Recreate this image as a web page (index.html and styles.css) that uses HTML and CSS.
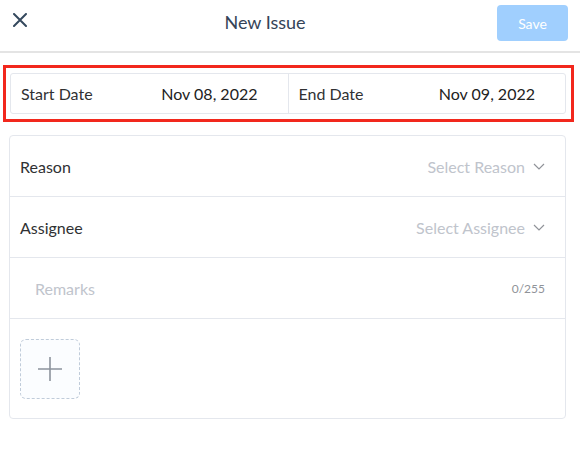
FILE: index.html
```html
<!DOCTYPE html>
<html>
<head>
<meta charset="utf-8">
<link rel="stylesheet" href="styles.css">
</head>
<body>
<div class="page">
  <header class="header">
    <button class="close" aria-label="Close">
      <svg width="14" height="14" viewBox="0 0 14 14"><path d="M1 1L13 13M13 1L1 13" stroke="#34495e" stroke-width="2" stroke-linecap="round"/></svg>
    </button>
    <div class="title">New Issue</div>
    <button class="save">Save</button>
  </header>

  <div class="highlight">
    <div class="dates">
      <div class="date-cell">
        <span class="date-label">Start Date</span>
        <span class="date-value">Nov 08, 2022</span>
      </div>
      <div class="date-cell">
        <span class="date-label">End Date</span>
        <span class="date-value">Nov 09, 2022</span>
      </div>
    </div>
  </div>

  <div class="card">
    <div class="row">
      <span class="row-label">Reason</span>
      <span class="select">Select Reason
        <svg width="12" height="7" viewBox="0 0 12 7"><path d="M1 1L6 6L11 1" fill="none" stroke="#909399" stroke-width="1.2"/></svg>
      </span>
    </div>
    <div class="row">
      <span class="row-label">Assignee</span>
      <span class="select">Select Assignee
        <svg width="12" height="7" viewBox="0 0 12 7"><path d="M1 1L6 6L11 1" fill="none" stroke="#909399" stroke-width="1.2"/></svg>
      </span>
    </div>
    <div class="row remarks">
      <span class="placeholder">Remarks</span>
      <span class="count">0/255</span>
    </div>
    <div class="upload-row">
      <div class="upload">
        <svg width="24" height="24" viewBox="0 0 24 24"><path d="M12 0V24M0 12H24" stroke="#8c939d" stroke-width="1.6"/></svg>
      </div>
    </div>
  </div>
</div>
</body>
</html>
```
FILE: styles.css
```css
* { box-sizing: border-box; }
html, body { margin: 0; padding: 0; background: #fff; }
body { font-family: Lato, "Noto Sans", sans-serif; color: #303133; }

.page { width: 580px; }

.header {
  height: 53px;
  display: flex;
  align-items: flex-start;
  padding: 0 12px 0 13px;
  border-bottom: 2px solid #e4e4e4;
}
.close {
  border: 0; background: none; padding: 0; margin-top: 13px;
  width: 14px; height: 14px; display: flex;
}
.title {
  flex: 1;
  text-align: center;
  font-size: 18px;
  color: #354458;
  line-height: 22px;
  margin: 11px 0 0 6px;
}
.save {
  margin-top: 5px;
  width: 71px; height: 36px;
  border: 0; border-radius: 4px;
  background: #a0cffe;
  color: #fff;
  font-family: Lato, sans-serif;
  font-size: 14px;
}

.highlight {
  margin: 12px 6px 0 3px;
  border: 3px solid #f2281d;
  padding: 5px 5px 5px 4px;
}
.dates {
  display: flex;
  height: 41px;
  border: 1px solid #e4e7ed;
  border-radius: 3px;
}
.date-cell {
  flex: 1;
  display: flex;
  align-items: center;
  justify-content: space-between;
  padding: 0 30px 0 10px;
  font-size: 16px;
  color: #222;
}
.date-cell + .date-cell { border-left: 1px solid #e4e7ed; }
.date-label { color: #303133; }

.card {
  margin: 13px 14px 0 9px;
  border: 1px solid #e4e7ed;
  border-radius: 4px;
}
.row {
  height: 61px;
  display: flex;
  align-items: center;
  justify-content: space-between;
  padding: 0 20px 0 10px;
  border-bottom: 1px solid #e4e7ed;
  font-size: 16px;
}
.select {
  display: flex; align-items: center; gap: 8px;
  color: #c0c4cc;
}
.remarks { padding-left: 25px; }
.placeholder { color: #c0c4cc; }
.count { font-size: 12px; color: #909399; }

.upload-row { padding: 20px 10px 19px; }
.upload {
  width: 60px; height: 60px;
  border: 1px dashed #c0ccda;
  border-radius: 6px;
  background: #fbfdff;
  display: flex; align-items: center; justify-content: center;
}
```
